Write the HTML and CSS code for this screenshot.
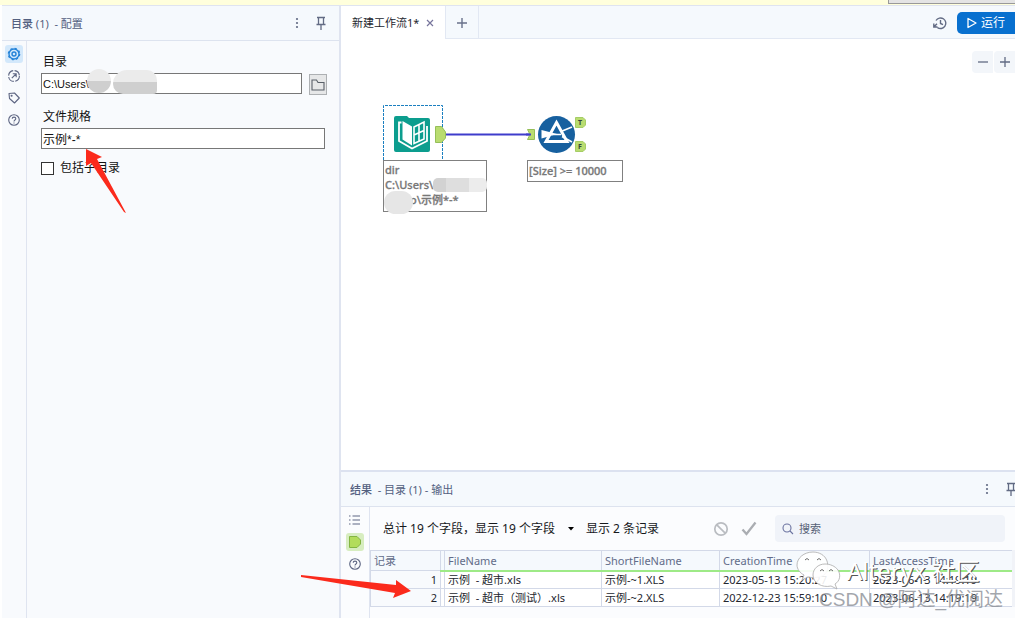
FILE: index.html
```html
<!DOCTYPE html>
<html lang="zh-CN">
<head>
<meta charset="utf-8">
<title>目录 (1) - 配置</title>
<link rel="stylesheet" href="styles.css">
</head>
<body>
<div class="notice"><div class="notice-button"></div></div>
<div class="app">
  <aside class="config">
    <header class="panel-head">
      <h2 class="panel-title"><b>目录</b> (1)&nbsp; - 配置</h2>
      <button class="icon-btn" aria-label="更多"><svg width="12" height="16" viewBox="0 0 12 16" fill="#626b84"><circle cx="6" cy="4" r="1.1"/><circle cx="6" cy="8" r="1.1"/><circle cx="6" cy="12" r="1.1"/></svg></button>
      <button class="icon-btn" aria-label="固定"><svg width="12" height="16" viewBox="0 0 12 16" fill="none" stroke="#626b84" stroke-width="1.3"><path d="M2 2.5H10M3.5 2.5V9M8.5 2.5V9M1.5 9.5H10.5M6 9.5V15"/></svg></button>
    </header>
    <div class="config-body">
      <nav class="rail">
        <button class="rail-btn selected" aria-label="配置"><svg width="14" height="14" viewBox="0 0 14 14" fill="none" stroke="#2583d8" stroke-width="1.4"><circle cx="7" cy="7" r="5"/><circle cx="7" cy="7" r="5.7" stroke-dasharray="2.2 2.28" stroke-width="1.2"/><circle cx="7" cy="7" r="2"/></svg></button>
        <button class="rail-btn" aria-label="导航"><svg width="14" height="14" viewBox="0 0 14 14" fill="none" stroke="#5e6683" stroke-width="1.1"><circle cx="7" cy="7" r="5.4" stroke-dasharray="7 1.48"/><path d="M4.8 9.2L9 5M5.8 4.8H9.2V8.2"/></svg></button>
        <button class="rail-btn" aria-label="注释"><svg width="14" height="14" viewBox="0 0 14 14" fill="none" stroke="#5e6683" stroke-width="1.1" stroke-linejoin="round"><path d="M2 2.5L7.5 2L12.3 7L7.5 12L2.5 7.5Z"/><circle cx="4.6" cy="4.8" r=".5"/></svg></button>
        <button class="rail-btn" aria-label="帮助"><svg width="14" height="14" viewBox="0 0 14 14" fill="none" stroke="#5e6683" stroke-width="1.1"><circle cx="7" cy="7" r="5.3"/><path d="M5.2 5.8C5.2 3.5 8.8 3.6 8.8 5.7C8.8 7 7 6.9 7 8.4M7 9.4V10.4"/></svg></button>
      </nav>
      <form class="form">
        <label class="label" for="dir">目录</label>
        <div class="dir-row">
          <div class="dir-box"><input class="field" id="dir" type="text" value="C:\Users\">
            <span class="mask mask-a"></span><span class="mask mask-b"></span></div>
          <button class="browse" type="button" aria-label="浏览"><svg width="14" height="14" viewBox="0 0 14 14" fill="none" stroke="#596069" stroke-width="1.1"><path d="M1 2H5.5L7 4.5H13V12H1Z"/></svg></button>
        </div>
        <label class="label" for="spec">文件规格</label>
        <input class="field spec" id="spec" type="text" value="示例*-*">
        <label class="check"><input type="checkbox">包括子目录</label>
      </form>
    </div>
  </aside>
  <main class="work">
    <div class="tabs">
      <div class="tab">新建工作流1* <button class="close" aria-label="关闭"><svg width="8" height="8" viewBox="0 0 8 8" stroke="#77759c" stroke-width="1.2"><path d="M1 1L7 7M7 1L1 7"/></svg></button></div>
      <button class="add" aria-label="新建"><svg width="12" height="12" viewBox="0 0 12 12" stroke="#69728b" stroke-width="1.4"><path d="M6 1V11M1 6H11"/></svg></button>
      <div class="spacer"></div>
      <button class="icon-btn history" aria-label="历史"><svg width="14" height="14" viewBox="0 0 14 14" fill="none" stroke="#626b84" stroke-width="1.4"><path d="M3 4.500A5.300 5.300 0 1 1 4.500 11.600M.8 7.500V11H4.500M.8 11L4 7.800M7.500 4V7.500L10 8.700"/></svg></button>
      <button class="run"><svg width="10" height="12" viewBox="0 0 10 12" fill="none" stroke="#fff" stroke-width="1.3" stroke-linejoin="round"><path d="M1 1.5L9 6L1 10.5Z"/></svg>运行</button>
    </div>
    <section class="canvas">
      <div class="zoom"><button aria-label="缩小"><svg width="12" height="12" viewBox="0 0 12 12" stroke="#626b84" stroke-width="1.3"><path d="M1 6H11"/></svg></button><button aria-label="放大"><svg width="12" height="12" viewBox="0 0 12 12" stroke="#626b84" stroke-width="1.3"><path d="M1 6H11M6 1V11"/></svg></button></div>
      <svg class="flow" width="210" height="60" viewBox="0 0 210 60">
        <path d="M.5 55V.5H59.5V55" fill="none" stroke="#1b7fc0" stroke-dasharray="3 1"/>
        <path d="M60 29.500H147" stroke="#3f3ccb" stroke-width="2"/>
        <path d="M52.500 21.500H58.500L62.500 27V33L58.500 37.500H52.500Z" fill="#b9dc70" stroke="#95bf58"/>
        <path d="M11 13Q11 11 13 11H24L26 13H45Q47 13 47 15V45Q47 47 45 47H13Q11 47 11 45Z" fill="#0c9d8e"/>
        <path d="M19.500 16L29 21.500V40.500L19.500 34.500Z" fill="#fff"/>
        <path d="M31 22L41 17V34L31 38.500ZM36 19.500V36.500M31 30L41 25.500" fill="none" stroke="#fff" stroke-width="1.600"/>
        <path d="M18.500 17.500H16V36L29 43.500L44 36V21" fill="none" stroke="#fff" stroke-width="1.800"/>
        <path d="M144.500 24.500H151.500V34.500H144.500L147 29.500Z" fill="#b9dc70" stroke="#95bf58"/>
        <path d="M143 29.500H148" stroke="#3f3ccb" stroke-width="2"/>
        <circle cx="173.500" cy="29.500" r="18.500" fill="#17609f"/>
        <path d="M158.500 25L174 29L158.500 33.500Z" fill="#fff"/>
        <path d="M173.500 17.500L184 36.500H163Z" fill="none" stroke="#fff" stroke-width="3"/>
        <path d="M169 29.500H178M178 26.500L189 22M179 31.500L189 37" stroke="#fff" stroke-width="1.700"/>
        <path d="M192.500 12.500H200L202.500 15V20L200 22.500H192.500ZM192.500 36.500H200L202.500 39V44L200 46.500H192.500Z" fill="#b9dc70" stroke="#a5cd66"/>
        <text class="port" x="195" y="20">T</text><text class="port" x="195" y="44">F</text>
      </svg>
      <div class="note note-dir">dir<br>C:\Users\<br><span class="pad"></span>o\示例*-*
        <span class="mask mask-c"></span><span class="mask mask-d"></span></div>
      <div class="note note-filter">[Size] &gt;= 10000</div>
    </section>
    <section class="results">
      <header class="panel-head result-head">
        <h2 class="panel-title"><b>结果</b> &nbsp;- 目录 (1) - 输出</h2>
        <button class="icon-btn" aria-label="更多"><svg width="12" height="16" viewBox="0 0 12 16" fill="#626b84"><circle cx="6" cy="4" r="1.1"/><circle cx="6" cy="8" r="1.1"/><circle cx="6" cy="12" r="1.1"/></svg></button>
        <button class="icon-btn" aria-label="固定"><svg width="12" height="16" viewBox="0 0 12 16" fill="none" stroke="#626b84" stroke-width="1.300"><path d="M2 2.500H10M3.500 2.500V9M8.500 2.500V9M1.500 9.500H10.500M6 9.500V15"/></svg></button>
      </header>
      <div class="result-body">
        <nav class="rail result-rail">
          <button class="rail-btn" aria-label="消息"><svg width="14" height="14" viewBox="0 0 14 14" stroke="#5e6683" stroke-width="1.2"><path d="M1 3H2.500M4.500 3H12M1 7H2.500M4.500 7H12M1 11H2.500M4.500 11H12"/></svg></button>
          <button class="rail-btn green" aria-label="输出"><svg width="14" height="14" viewBox="0 0 14 14" fill="#b2dc5b" stroke="#83b542"><path d="M1.500 1.500H9L12.500 5V9L9 12.500H1.500Z"/></svg></button>
          <button class="rail-btn" aria-label="帮助"><svg width="14" height="14" viewBox="0 0 14 14" fill="none" stroke="#5e6683" stroke-width="1.100"><circle cx="7" cy="7" r="5.300"/><path d="M5.200 5.800C5.200 3.500 8.800 3.600 8.800 5.700C8.800 7 7 6.900 7 8.400M7 9.400V10.400"/></svg></button>
        </nav>
        <div class="data">
          <div class="toolbar">
            <button class="fields">总计 19 个字段，显示 19 个字段<svg width="6" height="4" viewBox="0 0 6 4"><path d="M0 0H6L3 3.500Z"/></svg></button>
            <span class="count">显示 2 条记录</span>
            <div class="spacer"></div>
            <button class="icon-btn" aria-label="取消"><svg width="16" height="16" viewBox="0 0 16 16" fill="none" stroke="#b9bcc1" stroke-width="1.700"><circle cx="8" cy="8" r="6.200"/><path d="M3.800 3.800L12.200 12.200"/></svg></button>
            <button class="icon-btn tick" aria-label="应用"><svg width="16" height="16" viewBox="0 0 16 16" fill="none" stroke="#aaadb2" stroke-width="2.300"><path d="M1.500 8.500L5.500 13L14.500 1.500"/></svg></button>
            <label class="search"><svg width="12" height="12" viewBox="0 0 12 12" fill="none" stroke="#6b73a0" stroke-width="1.100"><circle cx="5" cy="5" r="4"/><path d="M8 8L11 11"/></svg><input type="search" placeholder="搜索" aria-label="搜索"></label>
          </div>
          <table class="grid">
            <colgroup><col class="c-rec"><col class="c-gap"><col class="c-file"><col class="c-short"><col class="c-created"><col></colgroup>
            <thead><tr><th class="rec">记录</th><th class="gap"></th><th>FileName</th><th>ShortFileName</th><th>CreationTime</th><th>LastAccessTime</th></tr></thead>
            <tbody>
              <tr><td class="num">1</td><td class="gap"></td><td>示例 &nbsp;- 超市.xls</td><td>示例-~1.XLS</td><td>2023-05-13 15:20:27</td><td>2023-06-13 14:19:19</td></tr>
              <tr><td class="num">2</td><td class="gap"></td><td>示例 &nbsp;- 超市（测试）.xls</td><td>示例-~2.XLS</td><td>2022-12-23 15:59:10</td><td>2023-06-13 14:19:19</td></tr>
            </tbody>
          </table>
        </div>
      </div>
    </section>
  </main>
</div>
<svg class="arrow arrow-spec" width="42" height="66" viewBox="0 0 42 66" fill="#fb2a1c"><path d="M1 0L17 8L12 10L41 64L39 63L6 14L1 17Z"/></svg>
<svg class="arrow arrow-row" width="112" height="24" viewBox="0 0 112 24" fill="#fb2a1c"><path d="M1 0L96 10L96 5L111 16L93 23L95 18L1 2Z"/></svg>
<svg class="chat" width="46" height="42" viewBox="0 0 46 42" fill="#fff" fill-opacity=".9" stroke="#aaa" stroke-width=".8"><path d="M17 2C8 2 1 8 1 15C1 19 4 23 8 25L6 30L12 27C29 30 34 21 31 11C29 5 23 2 17 2Z"/><path d="M29 14C22 14 17 19 17 25C17 33 26 38 35 36L41 39L39 34C44 31 45 25 42 20C39 16 34 14 29 14Z"/><path d="M9 10Q11 7 13 10M21 10Q23 7 25 10M24 21Q26 18 28 21M33 21Q35 18 37 21" stroke="#444" fill="none"/></svg>
<div class="brand">Alteryx 社区</div>
<div class="credit">CSDN @阿达_优阅达</div>
</body>
</html>
```

FILE: styles.css
```css
* { box-sizing: border-box; }
body {
  margin: 0;
  height: 100vh;
  display: flex;
  flex-direction: column;
  overflow: hidden;
  background: #fff;
  color: #23262e;
  font: 11px/15px "Noto Sans", "Noto Sans CJK SC", sans-serif;
}
button, input { font: inherit; color: inherit; }
button {
  display: flex;
  align-items: center;
  justify-content: center;
  padding: 0;
  border: 0;
  background: none;
}
svg { flex: none; }
.notice { height: 5px; background: #ffffdc; display: flex; justify-content: flex-end; flex: none; }
.notice-button { width: 127px; height: 4px; background: #e4e4e4; border: solid #999; border-width: 0 0 1px 1px; }
.app { flex: 1; display: flex; min-height: 0; padding-left: 2px; }
.config {
  width: 339px;
  flex: none;
  display: flex;
  flex-direction: column;
  border-right: 2px solid #dfe4f0;
  border-top: 1px solid #dfe4f0;
  background: #f8fafd;
}
.panel-head {
  height: 35px;
  flex: none;
  display: flex;
  align-items: center;
  gap: 12px;
  padding: 0 12px 0 9px;
  border-bottom: 1px solid #dde3ef;
  background: #f5f9fd;
}
.panel-title { flex: 1; margin: 0; font-size: 11px; font-weight: 400; color: #536080; }
.panel-title b { font-weight: 500; }
.config-body { flex: 1; display: flex; }
.rail {
  width: 25px;
  flex: none;
  display: flex;
  flex-direction: column;
  align-items: center;
  gap: 4px;
  padding-top: 4px;
  border-right: 1px solid #dfe4f0;
}
.rail-btn { width: 18px; height: 18px; border-radius: 3px; }
.selected { background: #d3e8fb; }
.green { background: #d7edc0; }
.form { flex: 1; display: flex; flex-direction: column; padding: 12px 14px 0; color: #111; font-size: 12px; }
.label { line-height: 18px; padding-left: 2px; }
.field {
  width: 100%;
  height: 21px;
  border: 1px solid #777;
  background: #fff;
  padding: 0 1px;
  font-size: 12px;
  font-family: "Liberation Sans", "Noto Sans CJK SC", sans-serif;
}
.dir-row { display: flex; gap: 7px; margin: 2px -2px 13px 0; align-items: flex-start; }
.dir-box { flex: 1; position: relative; height: 21px; display: flex; }
.dir-box .field { font-size: 11px; }
.browse { width: 18px; height: 21px; margin-top: 1px; border: 1px solid #adb0b3; background: #e6e7e8; }
.check { display: flex; align-items: center; gap: 6px; margin-top: 10px; line-height: 18px; }
.spec { margin-top: 2px; }
.check input { appearance: none; width: 13px; height: 13px; margin: 0; border: 1px solid #333; background: #fff; }
.mask { position: absolute; background: linear-gradient(#ebebeb 50%, #cfcfcf 50%); }
.mask-a { left: 46px; top: -4px; width: 24px; height: 24px; border-radius: 12px; }
.mask-b { left: 72px; top: -3px; width: 44px; height: 24px; border-radius: 14px 10px 4px 10px; }
.work { flex: 1; min-width: 0; display: flex; flex-direction: column; }
.tabs {
  height: 34px;
  flex: none;
  display: flex;
  align-items: center;
  background: #f5f9fd;
  border-top: 1px solid #dfe4f0;
  box-shadow: inset 0 -1px #e2e8f3;
}
.tab { height: 100%; display: flex; align-items: center; gap: 7px; padding: 0 11px; background: #fff; border-right: 1px solid #e2e8f3; }
.add { width: 33px; height: 100%; border-right: 1px solid #e2e8f3; }
.spacer { flex: 1; }
.history { margin-right: 10px; }
.run { width: 58px; height: 22px; gap: 4px; border-radius: 5px 0 0 5px; background: #0870cf; color: #fff; font-size: 12px; }
.canvas { flex: 1; position: relative; background: #fff; }
.zoom { display: flex; gap: 1px; justify-content: flex-end; padding-top: 12px; }
.zoom button { width: 21px; height: 22px; background: #f3f6fa; border-radius: 4px 0 0 4px; }
.flow { position: absolute; left: 42px; top: 66px; }
.port { font: bold 7px "Noto Sans", sans-serif; fill: #33443a; }
.note { position: absolute; top: 121px; border: 1px solid #808080; background: #fff; padding: 1px; color: #777; font-weight: 600; }
.note-dir { left: 42px; width: 104px; height: 52px; font-weight: 500; -webkit-text-stroke: 0.3px #777; }
.note-filter { left: 186px; width: 96px; height: 22px; padding-top: 2px; font-weight: 500; -webkit-text-stroke: 0.3px #777; }
.pad { display: inline-block; width: 25px; }
.mask-c { left: 49px; top: 17px; width: 54px; height: 14px; border-radius: 5px; background: linear-gradient(90deg, #d2d2d2 24%, #dedede 24% 66%, #ececec 66%); }
.mask-d { left: 0; top: 30px; width: 29px; height: 23px; border-radius: 12px; background: #e6e6e6; }
.results { height: 148px; flex: none; display: flex; flex-direction: column; border-top: 2px solid #dce2f0; background: #fbfcfe; }
.result-head { padding: 0 0 0 9px; margin-right: -2px; }
.result-body { flex: 1; display: flex; }
.result-rail { width: 29px; }
.data { flex: 1; min-width: 0; }
.toolbar { height: 43px; display: flex; align-items: center; padding: 0 10px 0 13px; font-size: 12px; color: #16181c; }
.fields { gap: 13px; }
.count { margin-left: 12px; }
.tick { margin: 0 18px 0 12px; }
.search { width: 230px; height: 27px; display: flex; align-items: center; gap: 5px; padding: 0 7px; background: #f0f3f9; border-radius: 4px; }
.search input { flex: 1; min-width: 0; border: 0; padding: 0; background: none; font-size: 11px; }
.search input::placeholder { color: #566176; opacity: 1; }
.grid { width: 100%; table-layout: fixed; border-collapse: collapse; background: #fff; white-space: nowrap; border-right: 3px solid #f1f3f8; }
.c-rec { width: 70px; }
.c-gap { width: 4px; }
.c-file { width: 157px; }
.c-short { width: 118px; }
.c-created { width: 150px; }
.grid th, .grid td { border: 1px solid #d3d9e8; padding: 0 3px; text-align: left; height: 18px; font-weight: 400; overflow: hidden; }
.grid th { height: 20px; background: #f5f9fd; border-bottom: 2px solid #9eea87; color: #626c89; }
.grid th.rec { border-bottom: 1px solid #d3d9e8; }
.grid .num { text-align: right; background: #f8fafd; }
.grid .gap { padding: 0; }
.arrow, .chat, .brand, .credit { position: absolute; pointer-events: none; }
.arrow-spec { left: 85px; top: 149px; }
.arrow-row { left: 300px; top: 575px; }
.chat { left: 796px; top: 550px; }
.brand { left: 847px; top: 557px; font: 24px/28px "Noto Sans", "Noto Sans CJK SC", sans-serif; color: #fff; text-shadow: 1px 1px #555; }
.credit { left: 819px; top: 588px; font: 19px/23px "Liberation Sans", "Noto Sans CJK SC", sans-serif; color: #858991; opacity: .75; }
```
